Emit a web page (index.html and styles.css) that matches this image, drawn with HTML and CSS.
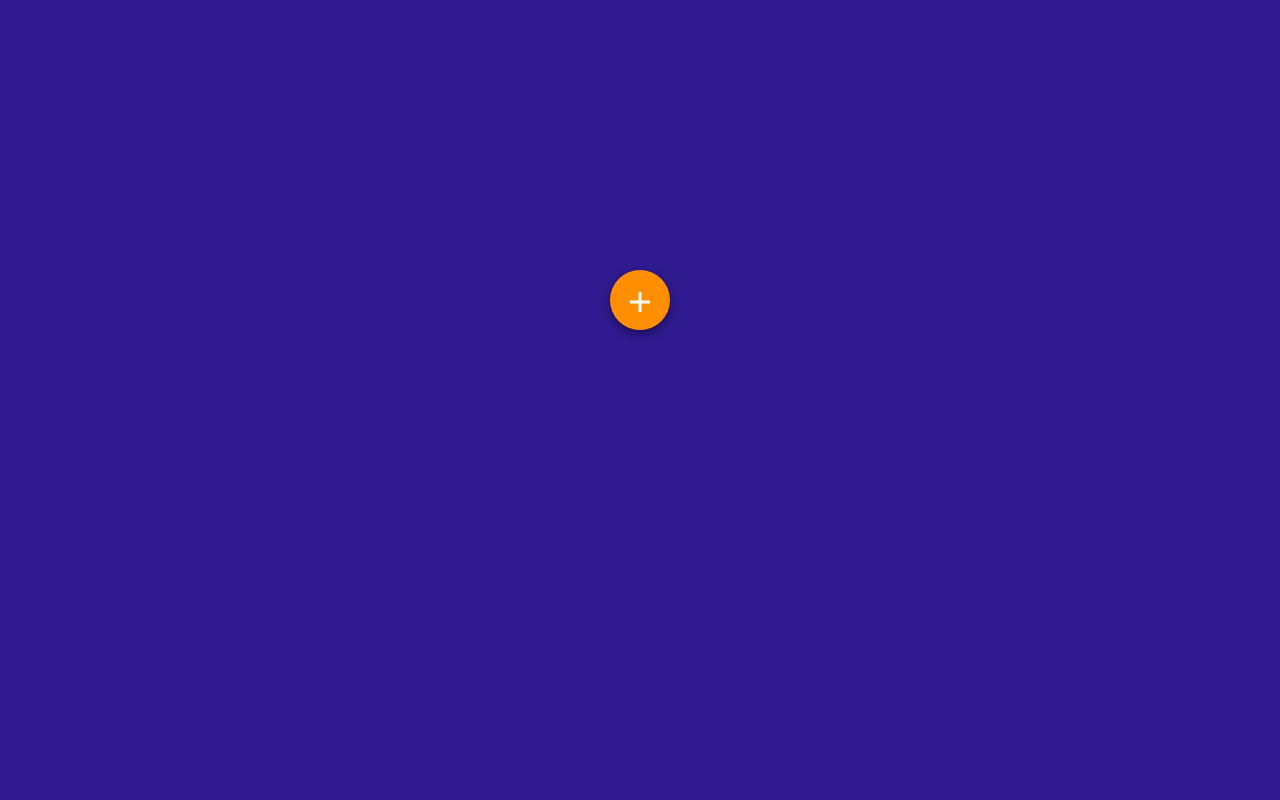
FILE: index.html
```html
<!DOCTYPE html>
<html>
<head>
<meta charset="utf-8">
<link rel="stylesheet" href="styles.css">
</head>
<body>
<main class="stage">
  <button class="fab" aria-label="Add">
    <svg class="fab-icon" width="20" height="20" viewBox="0 0 20 20"><path d="M10 0v20M0 10h20" stroke="#fff" stroke-width="3" fill="none"/></svg>
  </button>
</main>
</body>
</html>
```
FILE: styles.css
```css
html, body { margin: 0; padding: 0; height: 100%; }
body { background: #2f1a8f; font-family: "Roboto", sans-serif; }
.stage { display: flex; justify-content: center; padding-top: 270px; }
.fab {
  width: 60px; height: 60px; border-radius: 50%; border: none; padding: 0;
  background: #ff8f00;
  box-shadow: 0 4px 10px rgba(0,0,0,0.4);
  display: flex; align-items: center; justify-content: center;
  cursor: pointer;
}
.fab-icon { display: block; margin-top: 4px; }
```
